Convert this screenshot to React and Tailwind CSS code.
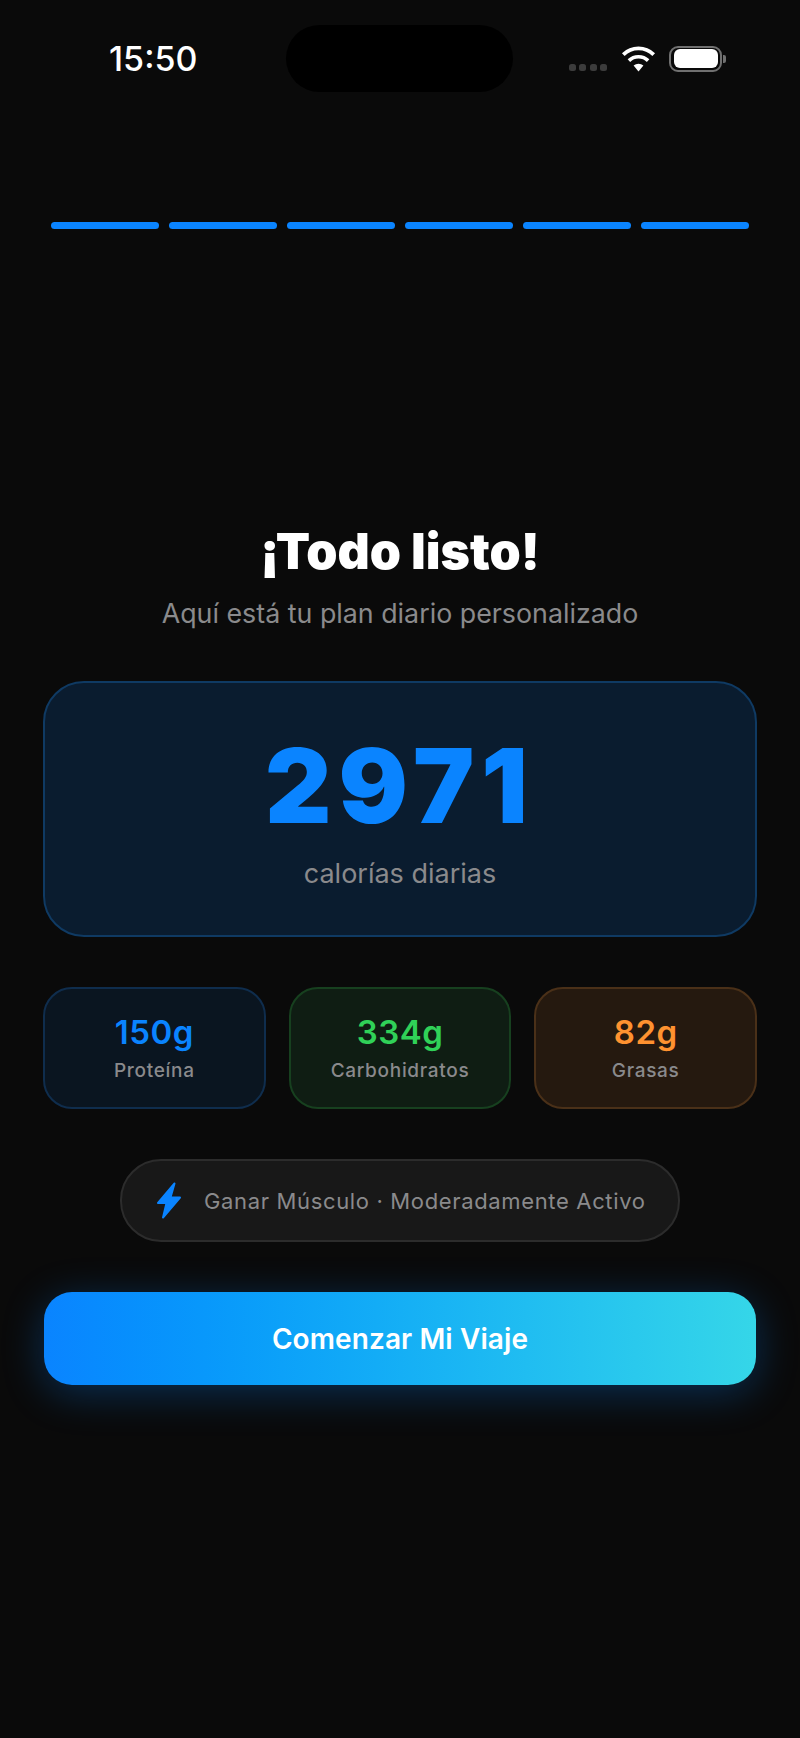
export default function App() {
  const macros = [
    { v: "150g", l: "Proteína", box: "border-[#0f2d4d] bg-[#0a1520]", c: "text-[#0a84ff]" },
    { v: "334g", l: "Carbohidratos", box: "border-[#17401f] bg-[#0f1d13]", c: "text-[#30d158]" },
    { v: "82g", l: "Grasas", box: "border-[#4a3018] bg-[#25190f]", c: "text-[#ff9230]" },
  ];
  return (
    <div className="flex h-[1738px] w-[800px] flex-col overflow-hidden bg-[#0a0a0a] font-['Inter',sans-serif] text-white">
      <div className="flex h-[67px] items-center justify-between mt-[25px] pl-[109px] pr-[74px]">
        <span className="w-[177px] text-[34px] font-medium leading-[40px]">15:50</span>
        <div className="h-[67px] w-[227px] rounded-[34px] bg-black" />
        <div className="flex w-[213px] items-center justify-end">
          <div className="mt-[18px] mr-[14px] flex gap-[3.5px]">
            <span className="size-[7px] rounded-[2.5px] bg-[#3c3c3c]" />
            <span className="size-[7px] rounded-[2.5px] bg-[#3c3c3c]" />
            <span className="size-[7px] rounded-[2.5px] bg-[#3c3c3c]" />
            <span className="size-[7px] rounded-[2.5px] bg-[#3c3c3c]" />
          </div>
          <svg width="35" height="26" viewBox="0 0 35 26" className="mr-[13px]">
            <path d="M17.5 25.5 L12.6 19.6 A7.4 7.4 0 0 1 22.4 19.6 Z" fill="#fff" />
            <path d="M7.9 14.6 A13.8 13.8 0 0 1 27.1 14.6" fill="none" stroke="#fff" strokeWidth="3.6" />
            <path d="M2.3 8.6 A21.8 21.8 0 0 1 32.7 8.6" fill="none" stroke="#fff" strokeWidth="3.8" />
          </svg>
          <div className="flex items-center">
            <div className="flex h-[26px] w-[53px] items-center justify-center rounded-[9px] border-[2px] border-[#707070]">
              <div className="h-[19px] w-[44px] rounded-[6px] bg-white" />
            </div>
            <div className="ml-[1px] h-[8px] w-[3px] rounded-r-[2px] bg-[#707070]" />
          </div>
        </div>
      </div>

      <div className="mt-[130px] flex gap-[10.4px] px-[51px]">
        {[0, 1, 2, 3, 4, 5].map((i) => (
          <div key={i} className="h-[7px] flex-1 rounded-full bg-[#0a84ff]" />
        ))}
      </div>

      <div className="mt-[295px] flex flex-col px-[43px]">
        <h1 className="text-center text-[50px] font-black leading-[54px]">¡Todo listo!</h1>
        <p className="mt-[18px] text-center text-[26.8px] leading-[34px] text-[#8a8a8c]">Aquí está tu plan diario personalizado</p>

        <div className="mt-[51px] flex h-[256px] flex-col items-center rounded-[41px] border-[2px] border-[#0f3a63] bg-[#0a1c2f]">
          <div className="mt-[43px] text-[103px] font-black leading-[120px] tracking-[7px] text-[#0a84ff]">2971</div>
          <div className="mt-[11px] text-[27px] leading-[34px] text-[#8a8a8c]">calorías diarias</div>
        </div>

        <div className="mt-[50px] flex gap-[23px]">
          {macros.map((m) => (
            <div key={m.l} className={`flex h-[122px] flex-1 flex-col items-center rounded-[29px] border-[2px] ${m.box}`}>
              <div className={`mt-[23px] text-[33px] font-semibold leading-[40px] tracking-[0.5px] ${m.c}`}>{m.v}</div>
              <div className="mt-[7px] text-[19px] font-medium leading-[24px] tracking-[0.7px] text-[#8a8a8c]">{m.l}</div>
            </div>
          ))}
        </div>

        <div className="mt-[50px] flex h-[83px] w-[560px] items-center self-center rounded-[41px] border-[2px] border-[#2c2c2c] bg-[#181818] pl-[34px]">
          <svg width="26" height="39" viewBox="0 0 26 39" className="mr-[22px] shrink-0">
            <path d="M18.5 2.5 L2 22 H10.5 L7 36.5 L24 16.5 H14.5 Z" fill="#0a84ff" stroke="#0a84ff" strokeWidth="2" strokeLinejoin="round" />
          </svg>
          <span className="whitespace-nowrap text-[22px] leading-[28px] tracking-[0.65px] text-[#8a8a8c]">Ganar Músculo · Moderadamente Activo</span>
        </div>

        <button className="mx-[1px] mt-[50px] h-[93px] rounded-[28px] bg-gradient-to-r from-[#0a84ff] to-[#35d6e8] text-[28px] font-semibold tracking-[0.1px] text-white shadow-[0_8px_41px_rgba(10,132,255,0.3)]">
          Comenzar Mi Viaje
        </button>
      </div>
    </div>
  );
}
